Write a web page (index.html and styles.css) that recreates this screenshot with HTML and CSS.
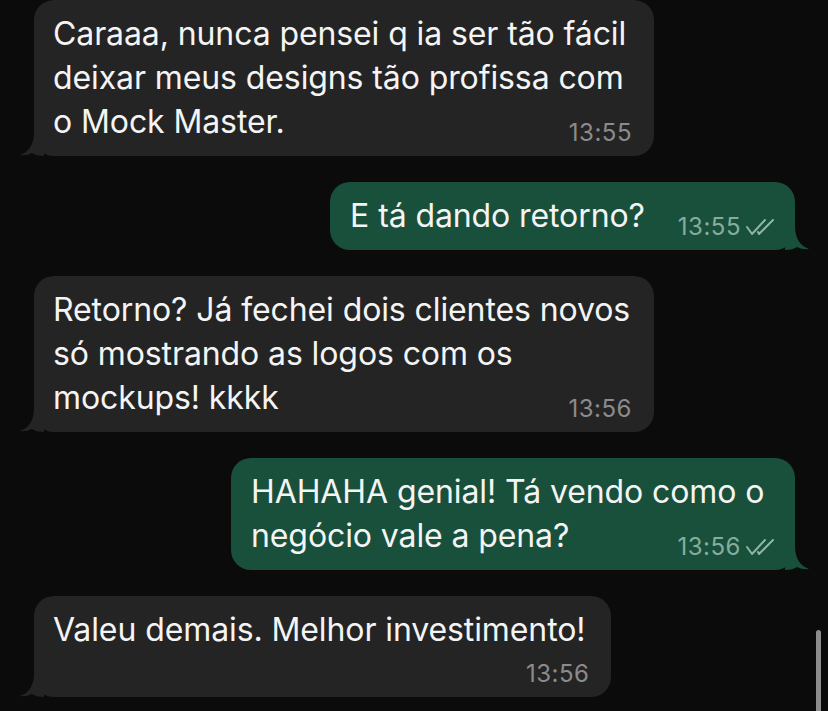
FILE: index.html
```
<!DOCTYPE html>
<html lang="pt-BR">
  <head>
    <meta charset="UTF-8" />
    <meta name="viewport" content="width=device-width, initial-scale=1.0" />
    <title>Conversa</title>
    <link rel="stylesheet" href="styles.css">
  </head>
  <body>
    <div class="chat">
      <div class="msg in">
        <div class="bubble">
          <p class="text">Caraaa, nunca pensei q ia ser tão fácil deixar meus designs tão profissa com o Mock Master.<span class="time">13:55</span></p>
          <svg class="tail" viewBox="0 0 24 24"><path d="M14 0 Q14 18 0 23 Q6 24 12 21 Q16 24 24 24 L24 0 Z" /></svg>
        </div>
      </div>

      <div class="msg out">
        <div class="bubble">
          <p class="text">E tá dando retorno?<span class="time">13:55
            <svg class="ticks" viewBox="0 0 30 18"><path d="M2 9 L7 16 L20 2 M13 14 L14 16 L28 2" /></svg></span></p>
          <svg class="tail" viewBox="0 0 24 24"><path d="M10 0 Q10 18 24 23 Q18 24 12 21 Q8 24 0 24 L0 0 Z" /></svg>
        </div>
      </div>

      <div class="msg in">
        <div class="bubble">
          <p class="text">Retorno? Já fechei dois clientes novos só mostrando as logos com os mockups! kkkk<span class="time">13:56</span></p>
          <svg class="tail" viewBox="0 0 24 24"><path d="M14 0 Q14 18 0 23 Q6 24 12 21 Q16 24 24 24 L24 0 Z" /></svg>
        </div>
      </div>

      <div class="msg out">
        <div class="bubble">
          <p class="text">HAHAHA genial! Tá vendo como o negócio vale a pena?<span class="time">13:56
            <svg class="ticks" viewBox="0 0 30 18"><path d="M2 9 L7 16 L20 2 M13 14 L14 16 L28 2" /></svg></span></p>
          <svg class="tail" viewBox="0 0 24 24"><path d="M10 0 Q10 18 24 23 Q18 24 12 21 Q8 24 0 24 L0 0 Z" /></svg>
        </div>
      </div>

      <div class="msg in">
        <div class="bubble tall">
          <p class="text">Valeu demais. Melhor investimento!<span class="time">13:56</span></p>
          <svg class="tail" viewBox="0 0 24 24"><path d="M14 0 Q14 18 0 23 Q6 24 12 21 Q16 24 24 24 L24 0 Z" /></svg>
        </div>
      </div>
    </div>
    <div class="scrollbar"></div>
  </body>
</html>
```

FILE: styles.css
```
html,
body {
  margin: 0;
  height: 100%;
  overflow: hidden;
}
body {
  background-color: #0b0b0b;
  font-family: "Inter", "Roboto", sans-serif;
  color: #f4f4f4;
}
.chat {
  display: flex;
  flex-direction: column;
  gap: 26px;
  padding: 0 33px 0 34px;
}
.msg {
  display: flex;
}
.msg.out {
  justify-content: flex-end;
}
.bubble {
  position: relative;
  max-width: 579px;
  padding: 12px 22px 12px 19px;
  border-radius: 20px;
  background-color: #242424;
}
.out .bubble {
  max-width: 516px;
  padding: 12px 28px 12px 20px;
  background-color: #18503c;
}
.bubble.tall {
  padding-right: 26px;
}
.text {
  display: flow-root;
  margin: 0;
  font-size: 32px;
  line-height: 44px;
  letter-spacing: -0.1px;
}

/* hora fica na ultima linha quando cabe */
.time {
  float: right;
  display: flex;
  align-items: center;
  gap: 4px;
  margin: 22px 0 0 30px;
  font-size: 24px;
  line-height: 22px;
  letter-spacing: 0.5px;
  color: #8b8b8b;
}
.out .time {
  margin-left: 33px;
  margin-right: -8px;
  color: #86ad9c;
}
.tall .time {
  float: none;
  justify-content: flex-end;
  margin: 11px -4px 0 0;
}
.ticks {
  width: 30px;
  height: 18px;
  fill: none;
  stroke: #8fb5a5;
  stroke-width: 2;
  stroke-linecap: round;
  stroke-linejoin: round;
}
.tail {
  position: absolute;
  bottom: 0;
  width: 24px;
  height: 24px;
}
.in .tail {
  left: -14px;
  fill: #242424;
}
.out .tail {
  right: -14px;
  fill: #18503c;
}
.scrollbar {
  position: absolute;
  right: 7px;
  top: 630px;
  bottom: -10px;
  width: 5px;
  border-radius: 3px;
  background-color: #8d8d8d;
}
```
